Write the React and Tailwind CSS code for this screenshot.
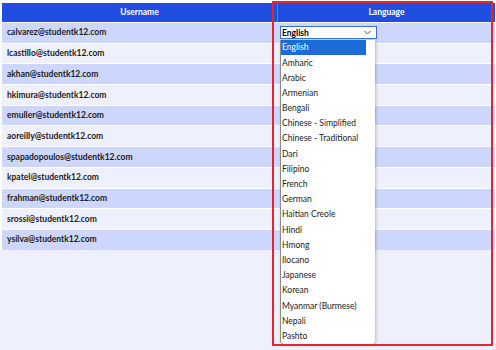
import React from 'react';

const users = [
  'calvarez@studentk12.com',
  'lcastillo@studentk12.com',
  'akhan@studentk12.com',
  'hkimura@studentk12.com',
  'emuller@studentk12.com',
  'aoreilly@studentk12.com',
  'spapadopoulos@studentk12.com',
  'kpatel@studentk12.com',
  'frahman@studentk12.com',
  'srossi@studentk12.com',
  'ysilva@studentk12.com',
];

const languages = [
  'English',
  'Amharic',
  'Arabic',
  'Armenian',
  'Bengali',
  'Chinese - Simplified',
  'Chinese - Traditional',
  'Dari',
  'Filipino',
  'French',
  'German',
  'Haitian Creole',
  'Hindi',
  'Hmong',
  'Ilocano',
  'Japanese',
  'Korean',
  'Myanmar (Burmese)',
  'Nepali',
  'Pashto',
];

function App() {
  return (
    <div className="relative w-[496px] h-[350px] overflow-hidden bg-[#eef1fd] font-['Lato','Noto_Sans',sans-serif]">
      <div className="bg-white pt-[3px] pl-[2px] pr-px">
        {/* Header */}
        <div className="grid grid-cols-[275px_1fr] h-[19px] bg-[#1f4fe1] text-white text-[8.5px] font-bold">
          <div className="flex items-center justify-center">Username</div>
          <div className="flex items-center justify-center border-l border-[#5b7fea]">Language</div>
        </div>

        {/* Rows */}
        {users.map((u, i) => (
          <div
            key={u}
            className={`grid grid-cols-[275px_1fr] h-[20.7px] border-t border-white ${
              i % 2 === 0 ? 'bg-[#cdd6fd]' : 'bg-[#eef1fd]'
            }`}
          >
            <div className="flex items-center pl-[5px] text-[8.5px] font-bold text-[#1b1b1b]">{u}</div>
            <div className="flex items-center pl-[3px]">
              {i === 0 && (
                <div className="flex items-center justify-between w-[97px] h-[13px] bg-white border border-[#3b6fe8] pl-px pr-[5px]">
                  <span className="text-[8.5px] font-bold text-black leading-none">English</span>
                  <svg width="7" height="5" viewBox="0 0 7 5" className="text-[#555]">
                    <path d="M0.5 1 L3.5 4 L6.5 1" fill="none" stroke="currentColor" strokeWidth="1" />
                  </svg>
                </div>
              )}
            </div>
          </div>
        ))}
      </div>

      {/* Open dropdown list */}
      <div className="absolute left-[280px] top-[40px] w-[95px] h-[304px] bg-white border-l border-[#8a8a8a] rounded-b-[4px] shadow-[1px_1px_3px_rgba(0,0,0,0.25)] pr-[9px]">
        {languages.map((l, i) => (
          <div
            key={l}
            className={`h-[15.2px] flex items-center pl-px text-[8.5px] leading-none ${
              i === 0 ? 'bg-[#1b6bd9] text-white' : 'text-[#222]'
            }`}
          >
            {l}
          </div>
        ))}
      </div>

      {/* Highlight box */}
      <div className="absolute left-[272px] top-px w-[221px] h-[345px] border-2 border-[#e5262d]" />
    </div>
  );
}

export default App;
